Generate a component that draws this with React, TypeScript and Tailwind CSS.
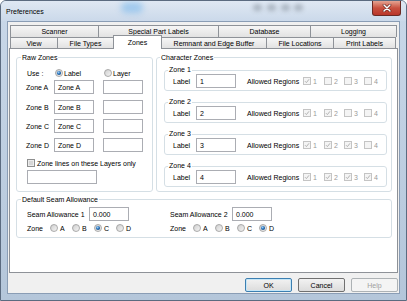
import React from "react";

const Radio = ({ checked = false }: { checked?: boolean }) => (
  <svg width="8" height="8" viewBox="0 0 8 8" className="shrink-0">
    <defs>
      <linearGradient id="rgrad" x1="0" y1="0" x2="1" y2="1">
        <stop offset="0" stopColor="#cdcdcd" />
        <stop offset="1" stopColor="#f7f7f7" />
      </linearGradient>
      <radialGradient id="rdot" cx="0.4" cy="0.35" r="0.7">
        <stop offset="0" stopColor="#a9d4f5" />
        <stop offset="0.5" stopColor="#2f7bc4" />
        <stop offset="1" stopColor="#16457a" />
      </radialGradient>
    </defs>
    <circle cx="4" cy="4" r="3.5" fill="url(#rgrad)" stroke="#9a9a9a" strokeWidth="0.8" />
    {checked && <circle cx="4" cy="4" r="2.1" fill="url(#rdot)" />}
  </svg>
);

const Check = ({ checked = false, disabled = false }: { checked?: boolean; disabled?: boolean }) => (
  <svg width="8" height="8" viewBox="0 0 8 8" className="shrink-0">
    <rect x="0.5" y="0.5" width="7" height="7" fill={disabled ? "#f4f4f4" : "#ececec"} stroke={disabled ? "#c4c4c4" : "#8e8f8f"} strokeWidth="1" />
    {!disabled && <rect x="2" y="2" width="4" height="4" fill="#d6d6d6" />}
    {checked && (
      <path d="M2 4.2 L3.4 5.6 L6 2.3" fill="none" stroke={disabled ? "#aaaaaa" : "#333333"} strokeWidth="0.9" />
    )}
  </svg>
);

const Input = ({ value = "", className }: { value?: string; className: string }) => (
  <div className={"h-[14px] bg-white border border-[#abadb3] pl-[3px] pt-[2px] leading-[9px] shrink-0 " + className}>{value}</div>
);

const tabBase = "h-[12px] flex items-center justify-center border-t border-l border-[#8e9298] bg-gradient-to-b from-[#f6f6f6] to-[#e2e2e2] shrink-0";
const tabBase2 = "h-[11px] flex items-center justify-center border-t border-l border-[#8e9298] bg-gradient-to-b from-[#f6f6f6] to-[#e2e2e2] shrink-0";

const ZoneBox = ({ n, checks }: { n: number; checks: boolean[] }) => (
  <fieldset className="w-[223px] h-[25px] ml-[7px] border border-[#d5dfe5] rounded-[3px]">
    <legend className="ml-[3px] px-[1px] leading-[8px]">Zone {n}</legend>
    <div className="flex items-center h-[14px] pl-[8px]">
      <span className="w-[23px] shrink-0">Label</span>
      <Input value={String(n)} className="w-[40px]" />
      <span className="ml-[11px] w-[56px] shrink-0">Allowed Regions</span>
      {checks.map((c, i) => (
        <div key={i} className={"flex items-center gap-[2px] shrink-0 " + (i === 0 ? "w-[21px]" : "w-[20px]")}>
          <Check checked={c} disabled />
          <span className="text-[#9a9a9a]">{i + 1}</span>
        </div>
      ))}
    </div>
  </fieldset>
);

const SeamCol = ({ n, sel, className }: { n: number; sel: number; className: string }) => (
  <div className={"flex flex-col " + className}>
    <div className="flex items-center mt-[3px]">
      <span className="w-[62px] shrink-0">Seam Allowance {n}</span>
      <Input value="0.000" className="w-[40px]" />
    </div>
    <div className="flex items-center h-[10px] mt-[2px]">
      <span className="w-[23px] shrink-0">Zone</span>
      {["A", "B", "C", "D"].map((l, i) => (
        <div key={l} className="w-[22px] flex items-center gap-[2px] shrink-0">
          <Radio checked={i === sel} />
          <span>{l}</span>
        </div>
      ))}
    </div>
  </div>
);

export default function App() {
  return (
    <div className="w-[407px] h-[301px] overflow-hidden bg-gradient-to-b from-[#c9d8e9] to-[#b4c6da] border border-[#5b6b80] rounded-t-[6px] flex flex-col text-[7px] leading-[9px] text-black font-['Liberation_Sans',Arial,sans-serif]">
      {/* title bar */}
      <div className="relative h-[20px] flex items-start justify-between shrink-0 bg-gradient-to-b from-[#dfe8f3] to-[#cbd9ea]">
        <div className="absolute left-[120px] top-[1px] w-[22px] h-[11px] rounded-full bg-[#7ab8ec] opacity-60 blur-[3px]" />
        <div className="absolute left-[252px] top-[3px] w-[9px] h-[7px] rounded-full bg-[#6d7782] opacity-40 blur-[2px]" />
        <div className="absolute left-[266px] top-[3px] w-[9px] h-[7px] rounded-full bg-[#6d7782] opacity-40 blur-[2px]" />
        <div className="absolute left-[280px] top-[3px] w-[9px] h-[7px] rounded-full bg-[#6d7782] opacity-40 blur-[2px]" />
        <div className="absolute left-[293px] top-[3px] w-[9px] h-[7px] rounded-full bg-[#6d7782] opacity-40 blur-[2px]" />
        <span className="relative pl-[5px] h-[20px] flex items-center">Preferences</span>
        <div className="relative mr-[5px] w-[29px] h-[15px] rounded-b-[3px] border border-t-0 border-[#6b2a24] bg-gradient-to-b from-[#e4a392] via-[#c8503f] to-[#b9362a] flex items-center justify-center">
          <svg width="10" height="8" viewBox="0 0 10 8">
            <path d="M2 1 L8 7 M8 1 L2 7" stroke="#5a1a14" strokeWidth="2.6" strokeLinecap="round" />
            <path d="M2 1 L8 7 M8 1 L2 7" stroke="#ffffff" strokeWidth="1.5" strokeLinecap="round" />
          </svg>
        </div>
      </div>

      {/* client */}
      <div className="flex-1 mx-[6px] mb-[6px] bg-[#f0f0f0] border border-[#8a9db5] flex flex-col">
        <div className="ml-[1px] mt-[3px] w-[389px] flex flex-col">
          {/* tab row 1 */}
          <div className="flex ml-[1px]">
            <div className={tabBase + " w-[88px]"}>Scanner</div>
            <div className={tabBase + " w-[120px]"}>Special Part Labels</div>
            <div className={tabBase + " w-[92px]"}>Database</div>
            <div className={tabBase + " w-[87px] border-r"}>Logging</div>
          </div>
          {/* tab row 2 */}
          <div className="flex items-end h-[11px] ml-[1px]">
            <div className={tabBase2 + " w-[47px]"}>View</div>
            <div className={tabBase2 + " w-[56px]"}>File Types</div>
            <div className="relative z-10 -mb-px w-[49px] h-[14px] shrink-0 flex items-center justify-center border-t border-l border-r border-[#8e9298] bg-white -mr-px">
              Zones
            </div>
            <div className={tabBase2 + " w-[105px]"}>Remnant and Edge Buffer</div>
            <div className={tabBase2 + " w-[67px]"}>File Locations</div>
            <div className={tabBase2 + " w-[63px] border-r"}>Print Labels</div>
          </div>
          {/* panel */}
          <div className="h-[225px] bg-white border border-[#8e9298] pl-[6px] pt-[4px] flex flex-col">
            <div className="flex">
              {/* Raw Zones */}
              <fieldset className="w-[137px] h-[139px] border border-[#d5dfe5] rounded-[3px]">
                <legend className="ml-[4px] px-[1px]">Raw Zones</legend>
                <div className="flex flex-col pl-[9px]">
                  <div className="flex items-center h-[10px] mt-[6px] pl-[1px]">
                    <span className="w-[28px] shrink-0">Use :</span>
                    <div className="w-[49px] flex items-center gap-[1px] shrink-0">
                      <Radio checked />
                      <span>Label</span>
                    </div>
                    <div className="flex items-center gap-[1px]">
                      <Radio />
                      <span>Layer</span>
                    </div>
                  </div>
                  {[
                    ["A", "mt-[2px]"],
                    ["B", "mt-[6px]"],
                    ["C", "mt-[5px]"],
                    ["D", "mt-[5px]"],
                  ].map(([z, m]) => (
                    <div key={z} className={"flex items-center " + m}>
                      <span className="w-[28px] shrink-0">Zone {z}</span>
                      <Input value={"Zone " + z} className="w-[40px]" />
                      <Input className="w-[40px] ml-[9px]" />
                    </div>
                  ))}
                  <div className="flex items-center gap-[2px] h-[10px] mt-[6px] pl-[1px]">
                    <Check />
                    <span>Zone lines on these Layers only</span>
                  </div>
                  <Input className="w-[70px] mt-[2px] ml-[1px]" />
                </div>
              </fieldset>
              {/* Character Zones */}
              <fieldset className="w-[236px] h-[139px] ml-[3px] border border-[#d5dfe5] rounded-[3px]">
                <legend className="ml-[3px] px-[1px]">Character Zones</legend>
                <div className="flex flex-col gap-[7px] mt-[4px]">
                  <ZoneBox n={1} checks={[true, false, false, false]} />
                  <ZoneBox n={2} checks={[true, true, false, false]} />
                  <ZoneBox n={3} checks={[true, true, true, false]} />
                  <ZoneBox n={4} checks={[true, true, true, true]} />
                </div>
              </fieldset>
            </div>
            {/* Default Seam Allowance */}
            <fieldset className="w-[376px] h-[43px] mt-[3px] border border-[#d5dfe5] rounded-[3px]">
              <legend className="ml-[4px] px-[1px]">Default Seam Allowance</legend>
              <div className="flex">
                <SeamCol n={1} sel={2} className="w-[153px] pl-[10px]" />
                <SeamCol n={2} sel={3} className="" />
              </div>
            </fieldset>
          </div>
        </div>
        {/* buttons */}
        <div className="flex justify-end gap-[6px] pr-[1px] mt-[5px]">
          <div className="w-[47px] h-[14px] rounded-[2px] border border-[#3c7fb1] bg-gradient-to-b from-[#f2f2f2] to-[#dcdcdc] flex items-center justify-center shadow-[inset_0_0_0_1px_#c6e6f7]">OK</div>
          <div className="w-[47px] h-[14px] rounded-[2px] border border-[#707070] bg-gradient-to-b from-[#f2f2f2] to-[#dcdcdc] flex items-center justify-center">Cancel</div>
          <div className="w-[47px] h-[14px] rounded-[2px] border border-[#adb2b5] bg-[#f4f4f4] text-[#a0a0a0] flex items-center justify-center">Help</div>
        </div>
      </div>
    </div>
  );
}
